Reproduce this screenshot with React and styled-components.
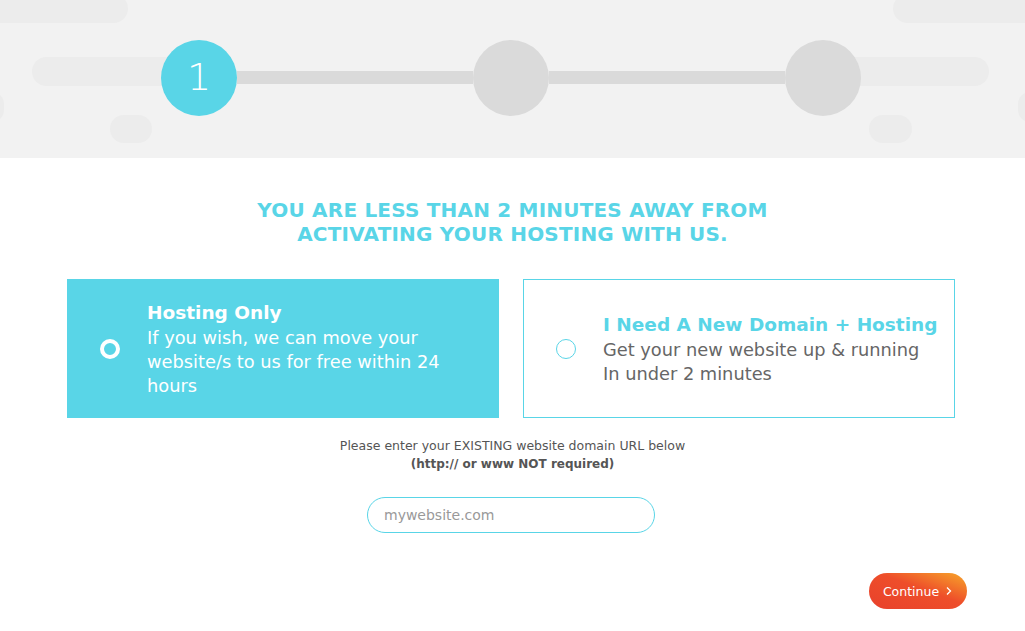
import React from "react";
import styled, { createGlobalStyle } from "styled-components";

const GlobalStyle = createGlobalStyle`
  * { box-sizing: border-box; }
  body {
    margin: 0;
    background: #fff;
    font-family: "DejaVu Sans", "Open Sans", sans-serif;
  }
`;

const steps = [1, 2, 3];

const App = () => {
  return (
    <>
      <GlobalStyle />
      <Header>
        <Pill style={{ left: -20, top: -6, width: 148, height: 29 }} />
        <Pill style={{ left: 893, top: -6, width: 160, height: 29 }} />
        <Pill style={{ left: 32, top: 57, width: 160, height: 29 }} />
        <Pill style={{ left: 830, top: 57, width: 159, height: 29 }} />
        <Pill style={{ left: 110, top: 115, width: 42, height: 28 }} />
        <Pill style={{ left: 869, top: 115, width: 43, height: 28 }} />
        <Pill style={{ left: -20, top: 92, width: 24, height: 30 }} />
        <Pill style={{ left: 1018, top: 92, width: 24, height: 30 }} />
        <Steps>
          {steps.map((s, i) => (
            <React.Fragment key={s}>
              {i > 0 && <Line />}
              <Step active={i === 0}>{i === 0 ? s : ""}</Step>
            </React.Fragment>
          ))}
        </Steps>
      </Header>

      <Main>
        <Title>
          YOU ARE LESS THAN 2 MINUTES AWAY FROM
          <br />
          ACTIVATING YOUR HOSTING WITH US.
        </Title>

        <Options>
          <Option selected>
            <Radio selected />
            <OptionText>
              <OptionTitle selected>Hosting Only</OptionTitle>
              <OptionDesc selected>
                If you wish, we can move your website/s to us for free within 24
                hours
              </OptionDesc>
            </OptionText>
          </Option>
          <Option>
            <Radio />
            <OptionText>
              <OptionTitle>I Need A New Domain + Hosting</OptionTitle>
              <OptionDesc>
                Get your new website up &amp; running
                <br />
                In under 2 minutes
              </OptionDesc>
            </OptionText>
          </Option>
        </Options>

        <Hint>
          Please enter your EXISTING website domain URL below
          <br />
          <b>(http:// or www NOT required)</b>
        </Hint>

        <Input placeholder="mywebsite.com" />

        <Footer>
          <Button>
            Continue
            <svg width="8" height="10" viewBox="0 0 8 10">
              <path d="M2 1.5 L5.5 5 L2 8.5" fill="none" stroke="#fff" strokeWidth="1.3" />
            </svg>
          </Button>
        </Footer>
      </Main>
    </>
  );
};

export default App;

const Header = styled.header`
  position: relative;
  height: 158px;
  background: #f2f2f2;
  overflow: hidden;
  display: flex;
  justify-content: center;
  padding-top: 40px;
  padding-right: 3px;
`;

const Pill = styled.div`
  position: absolute;
  background: #ececec;
  border-radius: 15px;
`;

const Steps = styled.div`
  position: relative;
  display: flex;
  align-items: center;
  height: 76px;
`;

const Step = styled.div`
  width: 76px;
  height: 76px;
  border-radius: 50%;
  background: ${(p) => (p.active ? "#59d5e7" : "#dadada")};
  color: #fff;
  display: flex;
  align-items: center;
  justify-content: center;
  font-family: "DejaVu Sans", sans-serif;
  font-weight: 200;
  font-size: 38px;
  padding-bottom: 2px;
`;

const Line = styled.div`
  width: 236px;
  height: 13px;
  margin-top: -1px;
  background: #dadada;
`;

const Main = styled.main`
  display: flex;
  flex-direction: column;
  align-items: center;
  padding-top: 40px;
`;

const Title = styled.h1`
  margin: 0;
  color: #59d5e7;
  font-size: 20px;
  font-weight: 600;
  line-height: 24px;
  text-align: center;
  letter-spacing: 0.2px;
`;

const Options = styled.div`
  display: flex;
  gap: 24px;
  margin-top: 33px;
  margin-right: 3px;
`;

const Option = styled.div`
  width: 432px;
  height: 139px;
  display: flex;
  align-items: center;
  padding: 0 10px 0 32px;
  background: ${(p) => (p.selected ? "#59d5e7" : "#fff")};
  border: 1px solid #59d5e7;
`;

const Radio = styled.span`
  flex: none;
  width: 20px;
  height: 20px;
  border-radius: 50%;
  border: ${(p) => (p.selected ? "4px solid #fff" : "1.5px solid #59d5e7")};
  margin-right: 27px;
`;

const OptionText = styled.div`
  display: flex;
  flex-direction: column;
`;

const OptionTitle = styled.div`
  font-size: 18.5px;
  font-weight: 700;
  line-height: 26px;
  color: ${(p) => (p.selected ? "#fff" : "#59d5e7")};
  white-space: nowrap;
`;

const OptionDesc = styled.div`
  font-size: 17.8px;
  line-height: 24px;
  color: ${(p) => (p.selected ? "#fff" : "#666")};
`;

const Hint = styled.p`
  margin: 19px 0 0;
  font-size: 12.5px;
  line-height: 18px;
  color: #555;
  text-align: center;
  b {
    font-weight: 700;
    font-size: 12px;
  }
`;

const Input = styled.input`
  margin-top: 24px;
  width: 288px;
  height: 36px;
  border: 1px solid #59d5e7;
  border-radius: 18px;
  padding: 0 16px;
  font-family: inherit;
  font-size: 14px;
  color: #555;
  outline: none;
  margin-right: 3px;
  &::placeholder {
    color: #999;
  }
`;

const Footer = styled.div`
  width: 100%;
  display: flex;
  justify-content: flex-end;
  padding-right: 58px;
  margin-top: 40px;
`;

const Button = styled.button`
  width: 98px;
  height: 36px;
  border: none;
  border-radius: 18px;
  background: linear-gradient(20deg, #e8412c 0%, #ee4e2a 55%, #f7a72a 100%);
  color: #fff;
  font-family: inherit;
  font-size: 12.5px;
  display: flex;
  align-items: center;
  justify-content: center;
  gap: 6px;
  cursor: pointer;
`;
